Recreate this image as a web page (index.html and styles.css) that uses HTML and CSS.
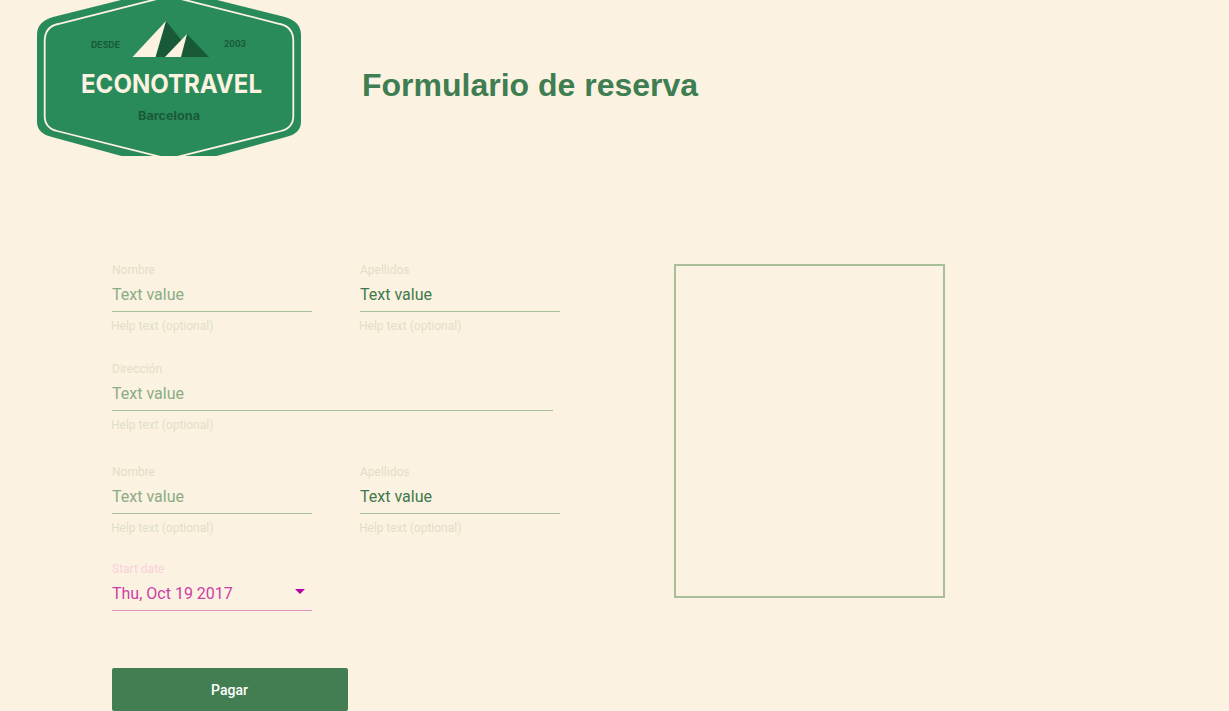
FILE: index.html
```html
<!DOCTYPE html>
<html lang="es">
  <head>
    <meta charset="UTF-8" />
    <title>Formulario de reserva</title>
    <link rel="stylesheet" href="styles.css">
  </head>
  <body>
    <header class="top">
      <svg class="logo" width="264" height="156" viewBox="0 0 264 156">
        <path class="logo-bg" d="M0 35 C0 25 6 20 16 17 L132 -12 L248 17 C258 20 264 25 264 35 L264 122 C264 130 258 135 249 137 L132 169 L15 137 C6 135 0 130 0 122 Z" />
        <path class="logo-line" d="M7.7 41 C7.7 32 12 26 21 24 L132 -4 L243 24 C252 26 256.3 32 256.3 41 L256.3 116 C256.3 124 252 129 244 131 L132 159 L20 131 C12 129 7.7 124 7.7 116 Z" />
        <polygon class="logo-dark" points="129,21 158,57 118.5,57" />
        <polygon class="logo-light" points="129,21 95.5,57 118.5,57" />
        <polygon class="logo-dark" points="150,34 172,57 144,57" />
        <polygon class="logo-light" points="150,34 128,57 144,57" />
        <text class="logo-small" x="54" y="48" textLength="29" lengthAdjust="spacingAndGlyphs">DESDE</text>
        <text class="logo-small" x="187" y="47" textLength="22" lengthAdjust="spacingAndGlyphs">2003</text>
        <text class="logo-name" x="44" y="93" textLength="181" lengthAdjust="spacingAndGlyphs">ECONOTRAVEL</text>
        <text class="logo-city" x="101" y="120" textLength="62" lengthAdjust="spacingAndGlyphs">Barcelona</text>
      </svg>
      <h1 class="title">Formulario de reserva</h1>
    </header>

    <main class="content">
      <form class="booking">
        <div class="row">
          <div class="field">
            <label>Nombre</label>
            <div class="value">Text value</div>
            <small>Help text (optional)</small>
          </div>
          <div class="field">
            <label>Apellidos</label>
            <div class="value filled">Text value</div>
            <small>Help text (optional)</small>
          </div>
        </div>
        <div class="row row-address">
          <div class="field wide">
            <label>Dirección</label>
            <div class="value">Text value</div>
            <small>Help text (optional)</small>
          </div>
        </div>
        <div class="row row-names">
          <div class="field">
            <label>Nombre</label>
            <div class="value">Text value</div>
            <small>Help text (optional)</small>
          </div>
          <div class="field">
            <label>Apellidos</label>
            <div class="value filled">Text value</div>
            <small>Help text (optional)</small>
          </div>
        </div>
        <div class="row row-date">
          <div class="field date">
            <label>Start date</label>
            <div class="value">Thu, Oct 19 2017<span class="arrow"></span></div>
          </div>
        </div>
        <button class="pay" type="button">Pagar</button>
      </form>
      <div class="preview"></div>
    </main>
  </body>
</html>
```

FILE: styles.css
```css
body {
  margin: 0;
  background: #fcf2e1;
  font-family: Roboto, sans-serif;
}
.top {
  display: flex;
  align-items: center;
  height: 156px;
  padding-left: 37px;
}
.logo {
  display: block;
  flex: none;
}
.logo-bg {
  fill: #2a8b5a;
}
.logo-line {
  fill: none;
  stroke: #fcf2e1;
  stroke-width: 1.8;
}
.logo-dark {
  fill: #185a38;
}
.logo-light {
  fill: #fcf2e1;
}
.logo-small {
  fill: #185a38;
  font: bold 9px Inter, sans-serif;
}
.logo-name {
  fill: #fcf2e1;
  font: bold 26px Inter, sans-serif;
}
.logo-city {
  fill: #185a38;
  font: bold 11.5px Inter, sans-serif;
}
.title {
  margin: 14px 0 0 61px;
  color: #3f7d52;
  font: bold 32px "Liberation Sans", sans-serif;
}
.content {
  display: flex;
  align-items: flex-start;
  gap: 114px;
  padding: 107px 0 0 112px;
}
.booking {
  width: 448px;
}
.row {
  display: flex;
  gap: 48px;
}
.row-address {
  margin-top: 29px;
}
.row-names {
  margin-top: 33px;
}
.row-date {
  margin-top: 27px;
}
.field {
  width: 200px;
}
.field.wide {
  width: 441px;
}
.field label {
  display: block;
  height: 14px;
  color: #dfdfc8;
  font-size: 12px;
  line-height: 14px;
}
.value {
  position: relative;
  margin-top: 6px;
  padding-bottom: 4px;
  border-bottom: 1px solid #a9bf9a;
  color: #8aac86;
  font-size: 16px;
  line-height: 24px;
}
.value.filled {
  color: #40794f;
}
.field small {
  display: block;
  margin: 7px 0 0 -1px;
  color: #dfdfc8;
  font-size: 12px;
  line-height: 14px;
}
.date label {
  color: #f8d0dc;
}
.date .value {
  border-bottom-color: #de95c0;
  color: #cb40a6;
}
.arrow {
  position: absolute;
  top: 7px;
  right: 7px;
  border-left: 5px solid transparent;
  border-right: 5px solid transparent;
  border-top: 5px solid #b800a0;
}
.pay {
  display: block;
  width: 236px;
  height: 43px;
  margin-top: 57px;
  padding: 0 1px 0 0;
  border: none;
  border-radius: 2px;
  background: #437e52;
  color: #fff;
  font: 500 14px Roboto, sans-serif;
}
.preview {
  box-sizing: border-box;
  width: 271px;
  height: 334px;
  margin-top: 1px;
  border: 2px solid #a9bf9a;
}
```
